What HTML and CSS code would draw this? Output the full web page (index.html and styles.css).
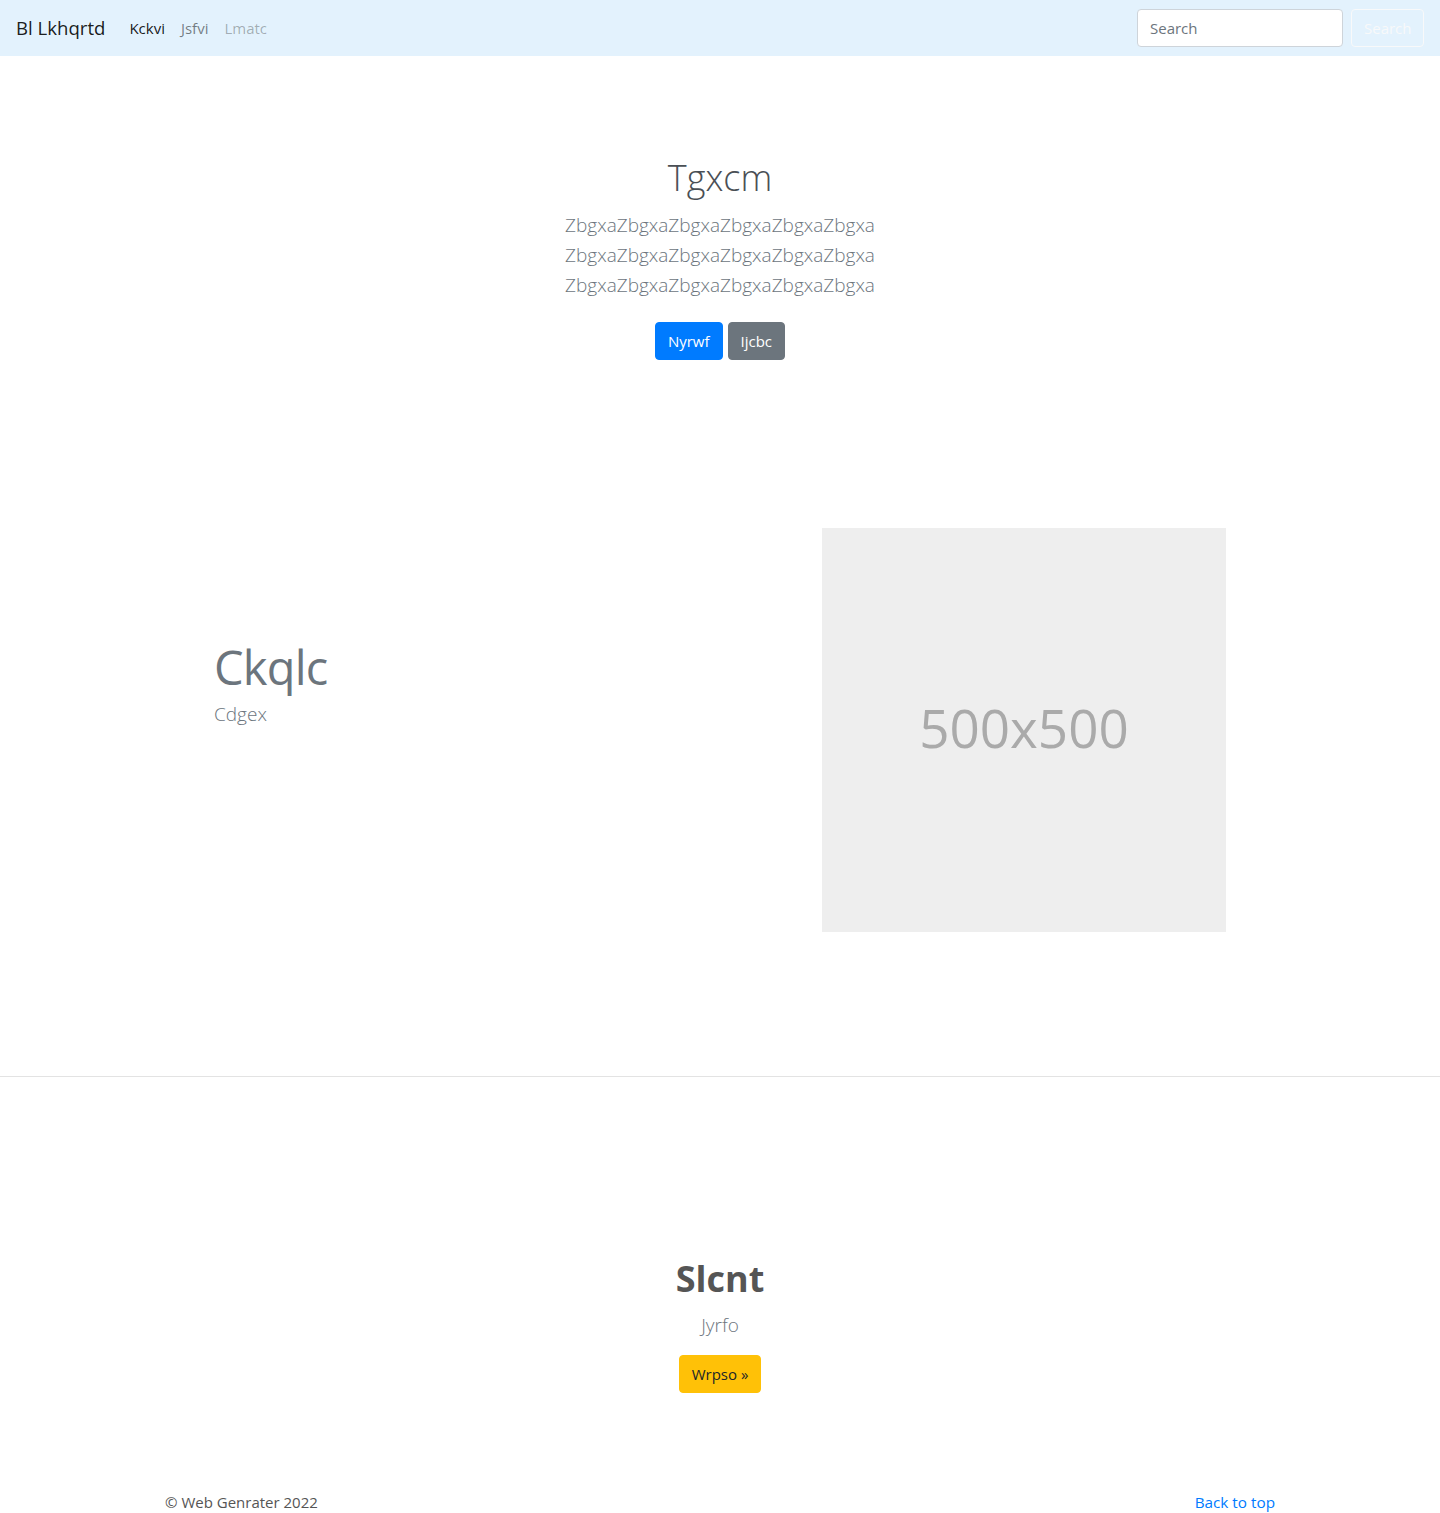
FILE: index.html
```html
<!DOCTYPE html>
<html lang="en">
<head>
<meta charset="utf-8">
<title>Bl Lkhqrtd</title>
<link rel="stylesheet" href="styles.css">
</head>
<body>
<nav class="navbar">
  <a class="brand" href="#">Bl Lkhqrtd</a>
  <ul class="nav">
    <li><a class="nav-link active" href="#">Kckvi</a></li>
    <li><a class="nav-link" href="#">Jsfvi</a></li>
    <li><a class="nav-link disabled" href="#">Lmatc</a></li>
  </ul>
  <form class="search">
    <input class="search-input" type="search" placeholder="Search">
    <button class="btn btn-outline-light" type="button">Search</button>
  </form>
</nav>

<section class="hero">
  <h1 class="hero-title">Tgxcm</h1>
  <p class="lead hero-lead">ZbgxaZbgxaZbgxaZbgxaZbgxaZbgxa ZbgxaZbgxaZbgxaZbgxaZbgxaZbgxa ZbgxaZbgxaZbgxaZbgxaZbgxaZbgxa</p>
  <div class="hero-actions">
    <a class="btn btn-primary" href="#">Nyrwf</a>
    <a class="btn btn-secondary" href="#">Ijcbc</a>
  </div>
</section>

<section class="featurette">
  <div class="featurette-text">
    <h2 class="featurette-heading">Ckqlc</h2>
    <p class="lead">Cdgex</p>
  </div>
  <div class="placeholder">500x500</div>
</section>

<hr class="divider">

<section class="cta">
  <h1 class="cta-title">Slcnt</h1>
  <p class="lead cta-lead">Jyrfo</p>
  <a class="btn btn-warning" href="#">Wrpso &raquo;</a>
</section>

<footer class="footer">
  <p class="copy">&copy; Web Genrater 2022</p>
  <a class="back" href="#">Back to top</a>
</footer>
</body>
</html>
```

FILE: styles.css
```css
* { box-sizing: border-box; }

body {
  margin: 0;
  font-family: "Open Sans", "Noto Sans", "Liberation Sans", sans-serif;
  font-size: 15px;
  line-height: 1.5;
  color: #212529;
  background: #fff;
}

a { text-decoration: none; }

.navbar {
  display: flex;
  align-items: center;
  height: 56px;
  padding: 8px 16px;
  background: #e3f2fd;
}

.brand {
  font-size: 18.6px;
  line-height: 30px;
  color: rgba(0, 0, 0, 0.9);
  margin-right: 16px;
}

.nav {
  display: flex;
  list-style: none;
  margin: 0;
  padding: 0;
  flex: 1;
}

.nav-link {
  display: block;
  padding: 8px;
  font-size: 15px;
  line-height: 24px;
  color: rgba(0, 0, 0, 0.5);
}
.nav-link.active { color: rgba(0, 0, 0, 0.9); }
.nav-link.disabled { color: rgba(0, 0, 0, 0.3); }

.search {
  display: flex;
  align-items: center;
}

.search-input {
  width: 206px;
  height: 38px;
  padding: 6px 12px;
  margin-right: 8px;
  font: inherit;
  font-size: 15px;
  color: #495057;
  background: #fff;
  border: 1px solid #ced4da;
  border-radius: 4px;
  outline: none;
}
.search-input::placeholder { color: #6c757d; }

.btn {
  display: inline-block;
  height: 38px;
  padding: 6px 12px;
  font-family: inherit;
  font-size: 15px;
  line-height: 24px;
  border: 1px solid transparent;
  border-radius: 4px;
  text-align: center;
  cursor: pointer;
}

.btn-outline-light {
  width: 73px;
  color: #f8f9fa;
  background: transparent;
  border-color: #f8f9fa;
}

.btn-primary { color: #fff; background: #007bff; border-color: #007bff; }
.btn-secondary { color: #fff; background: #6c757d; border-color: #6c757d; }
.btn-warning { color: #212529; background: #ffc107; border-color: #ffc107; }

.lead {
  font-size: 19px;
  font-weight: 300;
  line-height: 30px;
  color: #6c757d;
  margin: 0;
}

.hero {
  padding-top: 98px;
  text-align: center;
}

.hero-title {
  margin: 0 0 8px;
  font-size: 36px;
  font-weight: 300;
  line-height: 48px;
  color: #4a4f55;
}

.hero-lead {
  max-width: 340px;
  margin: 0 auto 22px;
}

.hero-actions {
  display: flex;
  justify-content: center;
  gap: 5px;
}

.featurette {
  display: flex;
  align-items: flex-start;
  width: 1140px;
  margin: 168px auto 0;
  padding: 0 64px;
}

.featurette-text {
  flex: 1;
  padding-top: 109px;
}

.featurette-heading {
  margin: 0 0 2px;
  font-size: 47px;
  font-weight: 400;
  line-height: 60px;
  letter-spacing: -0.8px;
  color: #6c757d;
}

.placeholder {
  display: flex;
  align-items: center;
  justify-content: center;
  width: 404px;
  height: 404px;
  padding-bottom: 4px;
  background: #eee;
  color: #aaa;
  font-size: 53px;
}

.divider {
  margin: 144px 0 0;
  border: 0;
  border-top: 1px solid #e3e3e3;
}

.cta {
  padding-top: 178px;
  text-align: center;
}

.cta-title {
  margin: 0 0 7px;
  font-size: 36px;
  font-weight: 700;
  line-height: 48px;
  color: #555;
}

.cta-lead { margin-bottom: 15px; }

.footer {
  display: flex;
  justify-content: space-between;
  width: 1140px;
  margin: 97px auto 0;
  padding: 0 15px;
}

.copy {
  margin: 0;
  font-size: 15px;
  line-height: 24px;
  color: #555;
}

.back {
  font-size: 15.3px;
  line-height: 24px;
  color: #007bff;
}
```
